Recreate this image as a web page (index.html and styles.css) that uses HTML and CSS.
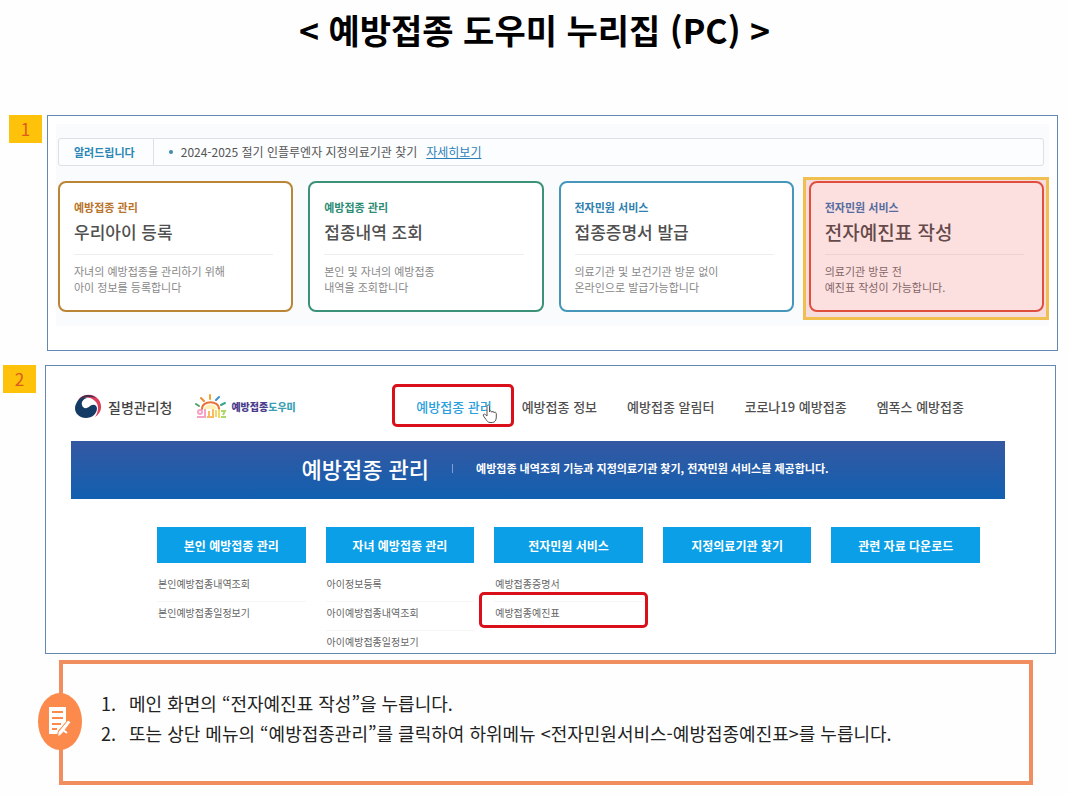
FILE: index.html
```html
<!DOCTYPE html>
<html lang="ko">
<head>
    <meta charset="UTF-8">
    <meta name="viewport" content="width=device-width, initial-scale=1.0">
    <title>예방접종 도우미 누리집 (PC)</title>
    <link rel="stylesheet" href="styles.css">
</head>
<body>
    <h1 class="title">&lt; 예방접종 도우미 누리집 (PC) &gt;</h1>

    <section class="step step-one">
        <div class="badge">1</div>
        <div class="panel main-panel">
            <div class="main-area">
                <div class="notice">
                    <strong class="notice-label">알려드립니다</strong>
                    <span class="dot"></span>
                    <span class="notice-text">2024-2025 절기 인플루엔자 지정의료기관 찾기</span>
                    <a class="notice-link" href="#">자세히보기</a>
                </div>
                <div class="cards">
                    <a class="card card-brown" href="#">
                        <span class="card-label">예방접종 관리</span>
                        <strong class="card-title">우리아이 등록</strong>
                        <span class="card-text">자녀의 예방접종을 관리하기 위해<br>아이 정보를 등록합니다</span>
                    </a>
                    <a class="card card-green" href="#">
                        <span class="card-label">예방접종 관리</span>
                        <strong class="card-title">접종내역 조회</strong>
                        <span class="card-text">본인 및 자녀의 예방접종<br>내역을 조회합니다</span>
                    </a>
                    <a class="card card-blue" href="#">
                        <span class="card-label">전자민원 서비스</span>
                        <strong class="card-title">접종증명서 발급</strong>
                        <span class="card-text">의료기관 및 보건기관 방문 없이<br>온라인으로 발급가능합니다</span>
                    </a>
                    <a class="card card-red" href="#">
                        <span class="card-label">전자민원 서비스</span>
                        <strong class="card-title">전자예진표 작성</strong>
                        <span class="card-text">의료기관 방문 전<br>예진표 작성이 가능합니다.</span>
                    </a>
                </div>
            </div>
        </div>
    </section>

    <section class="step step-two">
        <div class="badge">2</div>
        <div class="panel menu-panel">
            <header class="site-header">
                <a class="logo agency" href="#">
                    <svg width="28" height="26" viewBox="0 0 28 26" aria-hidden="true">
                        <path d="M4 6C9-1 20-1 25 6c4 7 2 13-4 17 4-6 4-12 0-16C16 2 9 3 4 6z" fill="#dc3f5c"/>
                        <path d="M3 8C7 0 17-1 22 4 16 2 9 3 3 8z" fill="#43304f"/>
                        <path d="M3 8c2-3 6-5 10-4-4 1-6 4-5 7 1 4 5 4 8 1 3-2 6-2 7 2 0 6-5 10-11 10C3 24-2 16 3 8z" fill="#143a66"/>
                    </svg>
                    <span>질병관리청</span>
                </a>
                <a class="logo helper" href="#">
                    <svg width="32" height="25" viewBox="0 0 32 25" aria-hidden="true">
                        <g fill="none" stroke-width="2" stroke-linecap="round">
                            <path d="M1 10l3 2" stroke="#4fa36a"/>
                            <path d="M6 4l3 3" stroke="#f08a2c"/>
                            <path d="M15 1v4" stroke="#f0a52c"/>
                            <path d="M24 3l-3 3" stroke="#3f8fd0"/>
                            <path d="M30 9l-4 2" stroke="#3aa58f"/>
                            <path d="M7 15c0-9 17-9 17 0" stroke="#ea7238"/>
                        </g>
                        <path d="M9 15c1-6 12-6 13 0z" fill="#fff0b8"/>
                        <g fill="none" stroke-width="2" opacity=".8">
                            <circle cx="5" cy="18" r="2" stroke="#f28cb8"/>
                            <path d="M2 23h7M10 15v9" stroke="#f28cb8"/>
                            <path d="M14 17v6M12 23h5M18 15v9" stroke="#f7a93b"/>
                            <path d="M21 16v7M24 15v9" stroke="#efcf3f"/>
                            <path d="M26 17h4l-2 4M26 23h5" stroke="#9bcf4a"/>
                        </g>
                    </svg>
                    <span>예방접종<em>도우미</em></span>
                </a>
                <nav class="nav">
                    <a class="active" href="#">예방접종 관리
                        <svg class="cursor" width="16" height="20" viewBox="0 0 16 20" aria-hidden="true">
                            <path d="M5 12V2.500c0-2 2.500-2 2.500 0V8c0-1.500 2.300-1.500 2.300.3 0-1.300 2.300-1.200 2.300.6 0-1.100 2.200-1 2.200.8V13c0 3-1.300 5.500-4 5.500H8c-2 0-3-1.500-4-3L1.500 12c-1-1.800.8-2.500 2-1.300z" fill="#fff" stroke="#555" stroke-width="1"/>
                        </svg>
                    </a>
                    <a href="#">예방접종 정보</a>
                    <a href="#">예방접종 알림터</a>
                    <a href="#">코로나19 예방접종</a>
                    <a href="#">엠폭스 예방접종</a>
                </nav>
            </header>
            <div class="banner">
                <h2>예방접종 관리</h2>
                <span class="divider"></span>
                <p>예방접종 내역조회 기능과 지정의료기관 찾기, 전자민원 서비스를 제공합니다.</p>
            </div>
            <div class="columns">
                <div class="column">
                    <button type="button">본인 예방접종 관리</button>
                    <ul>
                        <li><a href="#">본인예방접종내역조회</a></li>
                        <li><a href="#">본인예방접종일정보기</a></li>
                    </ul>
                </div>
                <div class="column">
                    <button type="button">자녀 예방접종 관리</button>
                    <ul>
                        <li><a href="#">아이정보등록</a></li>
                        <li><a href="#">아이예방접종내역조회</a></li>
                        <li><a href="#">아이예방접종일정보기</a></li>
                    </ul>
                </div>
                <div class="column">
                    <button type="button">전자민원 서비스</button>
                    <ul>
                        <li><a href="#">예방접종증명서</a></li>
                        <li class="marked"><a href="#">예방접종예진표</a></li>
                    </ul>
                </div>
                <div class="column">
                    <button type="button">지정의료기관 찾기</button>
                </div>
                <div class="column">
                    <button type="button">관련 자료 다운로드</button>
                </div>
            </div>
        </div>
    </section>

    <section class="guide">
        <div class="guide-icon">
            <svg width="24" height="32" viewBox="0 0 24 32" aria-hidden="true">
                <path d="M1 1h17v15l-8 9v3H1z" fill="#fff"/>
                <path d="M4 6h11M4 12h11M4 18h9M4 23h5" fill="none" stroke="#fb8a4c" stroke-width="2"/>
                <path d="M20 14l3 2-9 12-4 3v-5z" fill="#fff" stroke="#fb8a4c" stroke-width="1"/>
                <path d="M15 24l4 3" stroke="#fff" stroke-width="2"/>
            </svg>
        </div>
        <ol>
            <li>메인 화면의 “전자예진표 작성”을 누릅니다.</li>
            <li>또는 상단 메뉴의 “예방접종관리”를 클릭하여 하위메뉴 &lt;전자민원서비스-예방접종예진표&gt;를 누릅니다.</li>
        </ol>
    </section>
</body>
</html>
```
FILE: styles.css
```css
* {
    box-sizing: border-box;
}
body {
    margin: 0;
    background: #fefefe;
    color: #222;
    font-family: "Noto Sans CJK KR", sans-serif;
}
a {
    color: inherit;
    text-decoration: none;
}
ul, ol, p, h1, h2 {
    margin: 0;
    padding: 0;
}
.title {
    padding: 5px 0 0;
    font-size: 34px;
    line-height: 50px;
    font-weight: 700;
    text-align: center;
    color: #000;
}

/* numbered steps */
.step {
    display: flex;
    align-items: flex-start;
}
.step-one {
    gap: 5px;
    padding: 60px 11px 0 9px;
}
.step-two {
    gap: 9px;
    padding: 14px 13px 0 3px;
}
.badge {
    width: 33px;
    background: #fec20b;
    color: #dd5a1c;
    font-size: 17px;
    line-height: 28px;
    text-align: center;
}
.panel {
    flex: 1;
    border: 1px solid #6488b4;
    background: #fff;
}

/* first panel */
.main-panel {
    padding: 8px 8px 24px;
}
.main-area {
    padding: 14px 5px 14px 2px;
    background: #f9fbfd;
}
.notice {
    display: flex;
    align-items: center;
    height: 28px;
    border: 1px solid #dde1e5;
    border-radius: 3px;
    background: #fcfdfe;
    font-size: 12px;
    line-height: 26px;
    color: #555;
}
.notice-label {
    padding: 0 18px 0 15px;
    border-right: 1px solid #dde1e5;
    font-size: 11px;
    color: #2b87b5;
}
.dot {
    width: 4px;
    height: 4px;
    margin: 0 8px 0 15px;
    border-radius: 50%;
    background: #3a8ca8;
}
.notice-link {
    margin-left: 9px;
    font-size: 12px;
    color: #2b7fb8;
    text-decoration: underline;
}
.cards {
    display: grid;
    grid-template-columns: repeat(4, 1fr);
    gap: 15px;
    padding-top: 15px;
}
.card {
    position: relative;
    display: flex;
    flex-direction: column;
    padding: 15px 18px 15px 14px;
    border: 2px solid;
    border-radius: 8px;
    background: #fff;
}
.card-label {
    font-size: 11px;
    line-height: 18px;
    font-weight: 700;
}
.card-title {
    padding-bottom: 6px;
    border-bottom: 1px solid #eee;
    font-size: 17px;
    line-height: 32px;
    font-weight: 500;
    color: #505050;
}
.card-text {
    padding-top: 8px;
    font-size: 11px;
    line-height: 16px;
    color: #888;
}
.card-brown {
    border-color: #bb8536;
}
.card-brown .card-label {
    color: #b9732c;
}
.card-green {
    border-color: #3c9279;
}
.card-green .card-label {
    color: #2c8c74;
}
.card-blue {
    border-color: #4596ba;
}
.card-blue .card-label {
    color: #2d80b0;
}
.card-red {
    border-color: #dc4a35;
}
.card-red .card-label {
    color: #2d6fae;
}
.card-red .card-title {
    font-size: 19px;
    color: #444;
}
.card-red .card-text {
    color: #666;
}
/* highlight over the card to press */
.card-red::after {
    content: "";
    position: absolute;
    inset: -6px -7px -10px -8px;
    border: 3px solid #f0bf50;
    background: rgba(240, 100, 100, 0.2);
}

/* second panel */
.menu-panel {
    padding: 0 50px 0 25px;
}
.site-header {
    display: flex;
    align-items: center;
    height: 75px;
    padding: 6px 41px 0 3px;
}
.logo {
    display: flex;
    align-items: center;
}
.agency {
    gap: 6px;
    font-size: 14px;
    font-weight: 500;
    color: #444;
}
.helper {
    gap: 4px;
    margin-left: 23px;
    font-size: 10px;
    font-weight: 900;
    color: #4b3c8c;
}
.helper em {
    font-style: normal;
    color: #3c9fb4;
}
.nav {
    display: flex;
    gap: 30px;
    margin-left: auto;
    font-size: 13px;
    font-weight: 500;
    color: #505050;
}
.nav .active {
    position: relative;
    color: #2ba0dc;
}
.nav .active::before,
.marked::before {
    content: "";
    position: absolute;
    border: 3px solid #d9101a;
    border-radius: 5px;
}
.nav .active::before {
    inset: -13px -22px -11px -24px;
}
.cursor {
    position: absolute;
    right: -6px;
    bottom: -8px;
}
.banner {
    display: flex;
    align-items: center;
    justify-content: center;
    height: 58px;
    padding: 0 0 4px 54px;
    background: linear-gradient(#3558a2, #1160b0);
    color: #fff;
}
.banner h2 {
    font-size: 22px;
    line-height: 32px;
    font-weight: 500;
}
.divider {
    width: 1px;
    height: 9px;
    margin: 0 23px;
    background: #7f9fd0;
}
.banner p {
    font-size: 11px;
    font-weight: 700;
}
.columns {
    display: grid;
    grid-template-columns: repeat(5, 1fr);
    gap: 20px;
    padding: 28px 25px 0 86px;
}
.column button {
    width: 100%;
    height: 36px;
    padding: 0;
    border: 0;
    background: #0a9fe6;
    color: #fff;
    font-family: inherit;
    font-size: 12px;
    font-weight: 700;
    cursor: pointer;
}
.column ul {
    padding-top: 10px;
    list-style: none;
}
.column li {
    position: relative;
    padding: 0 0 6px 1px;
    border-bottom: 1px solid #f6f6f6;
    font-size: 10px;
    line-height: 22px;
    color: #666;
}
.column li:last-child {
    padding-bottom: 0;
    border-bottom: 0;
}
.marked::before {
    inset: -10px -5px -4px -15px;
}

/* instructions */
.guide {
    position: relative;
    margin: 6px 36px 10px 59px;
    padding: 24px 20px 33px 38px;
    border: 4px solid #f08e60;
}
.guide-icon {
    position: absolute;
    top: 29px;
    left: -25px;
    display: flex;
    align-items: center;
    justify-content: center;
    width: 44px;
    height: 57px;
    border-radius: 50%;
    background: #fb8a4c;
}
.guide ol {
    list-style: none;
    counter-reset: guide;
}
.guide li {
    display: flex;
    counter-increment: guide;
    font-size: 18px;
    line-height: 30px;
}
.guide li::before {
    content: counter(guide) ".";
    flex: 0 0 28px;
}
```
